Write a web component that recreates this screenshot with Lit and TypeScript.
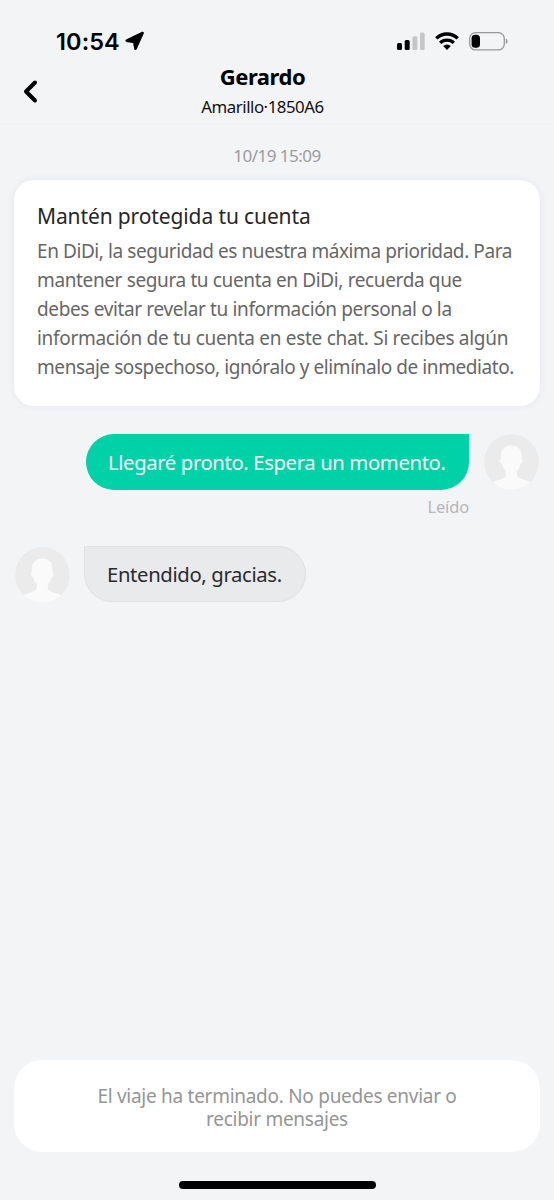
import { LitElement, html, css } from "lit";
import { customElement } from "lit/decorators.js";
import { styleMap } from "lit/directives/style-map.js";

@customElement("user-avatar")
export class UserAvatar extends LitElement {
  static styles = css`
    :host { display: block; flex: none; width: 55px; height: 56px; }
    svg { display: block; }
  `;
  render() {
    return html`<svg width="55" height="56" viewBox="0 0 55 56">
      <defs><clipPath id="round"><ellipse cx="27.5" cy="28" rx="27.300" ry="27.800" /></clipPath></defs>
      <g clip-path="url(#round)">
        <rect width="55" height="56" fill="#ebebec" />
        <path fill="#fafafa" d="M27.300 11.500c-6.600 0-10.400 4.200-10.400 10.400 0 1.200 0 2.300.1 3.300-1.100 0-1.200 1.400-.8 2.700.3 1.200.8 2 1.800 2 .6 3 1.900 5.200 3.800 7v3.600c0 3.200-3.500 4.300-6.800 5.300-3.200.9-5 1.700-7 3V57h39v-8.200c-2-1.300-3.800-2.100-7-3-3.300-1-7.200-2.100-7.200-5.300v-3.600c1.900-1.800 3.200-4 3.800-7 1 0 1.500-.8 1.800-2 .4-1.300.3-2.700-.8-2.700.1-1 .1-2.100.1-3.300 0-6.200-3.800-10.400-10.400-10.400z" />
      </g>
    </svg>`;
  }
}

@customElement("app-root")
export class AppRoot extends LitElement {
  static styles = css`
    :host {
      display: flex;
      flex-direction: column;
      box-sizing: border-box;
      width: 554px;
      height: 1200px;
      background: #f3f4f6;
      color: #000;
      font-family: "Noto Sans", "Open Sans", sans-serif;
      overflow: hidden;
    }
    .status { display: flex; align-items: center; height: 56px; padding: 26px 46px 0 56px; box-sizing: border-box; }
    .time { font: 600 23.500px/30px Inter, sans-serif; padding-top: 2px; letter-spacing: 0.1px; }
    .arrow { margin-left: 5px; }
    .grow { flex: 1; }
    .signal { margin-right: 10px; }
    .wifi { margin-right: 10px; }
    svg { display: block; flex: none; }
    .header { display: grid; grid-template-columns: 60px 1fr 60px; height: 68px; padding-right: 29px; box-sizing: border-box; border-bottom: 1px solid #f0f1f3; box-shadow: 0 1px 3px rgba(0, 0, 0, 0.02); }
    .back { padding: 23px 0 0 22px; }
    .who { text-align: center; padding-top: 6px; }
    .name { font-size: 22px; font-weight: 700; line-height: 28px; letter-spacing: -0.450px; }
    .car { font-size: 16.800px; line-height: 24px; padding-top: 5px; color: #111; letter-spacing: -0.450px; }
    .date { margin-top: 20px; height: 24px; line-height: 24px; font-size: 17px; letter-spacing: -0.520px; text-align: center; color: #9b9c9e; }
    .notice { margin: 12px 14px 0; height: 226px; box-sizing: border-box; padding: 20px 23px 0; border-radius: 20px; background: #fff; box-shadow: 0 0 8px rgba(30, 40, 60, 0.06); white-space: nowrap; }
    .title { font-size: 21px; line-height: 32px; color: #262626; letter-spacing: -0.120px; }
    .body { padding-top: 5px; font-size: 19px; line-height: 29px; color: #666; }
    .row { display: flex; }
    .sent { margin: 28px 15px 0 0; justify-content: flex-end; gap: 15px; }
    .received { margin: 27px 0 0 15px; gap: 14px; }
    .received user-avatar { margin-top: 1px; }
    .bubble { display: flex; align-items: center; box-sizing: border-box; height: 56px; font-size: 20.300px; white-space: nowrap; }
    .mine { width: 383px; padding: 0 0 1px 22px; background: #01d1a6; color: #fff; border-radius: 28px 0 28px 28px; letter-spacing: -0.380px; }
    .theirs { width: 222px; padding: 0 0 0 22px; background: #e9eaec; color: #2b2b2e; border: 1px solid #dfe0e2; border-radius: 0 28px 28px 28px; letter-spacing: -0.360px; }
    .read { height: 24px; margin: 5px 85px 0 0; text-align: right; font-size: 16.500px; line-height: 24px; color: #b6b7b9; letter-spacing: -0.150px; }
    .ended { box-sizing: border-box; margin: 0 14px; height: 92px; padding: 25px 80px 0; border-radius: 28px; background: #fff; color: #959595; font-size: 19px; line-height: 23px; letter-spacing: -0.280px; text-align: center; }
    .home { width: 197px; height: 8px; margin: 29px auto 11px 179px; border-radius: 4px; background: #000; }
  `;

  private notice = [
    { text: "En DiDi, la seguridad es nuestra máxima prioridad. Para", tracking: -0.42 },
    { text: "mantener segura tu cuenta en DiDi, recuerda que", tracking: -0.37 },
    { text: "debes evitar revelar tu información personal o la", tracking: -0.36 },
    { text: "información de tu cuenta en este chat. Si recibes algún", tracking: -0.3 },
    { text: "mensaje sospechoso, ignóralo y elimínalo de inmediato.", tracking: -0.42 },
  ];

  render() {
    return html`
      <div class="status">
        <span class="time">10:54</span>
        <svg class="arrow" width="20" height="20" viewBox="0 0 20 20"><path d="M1.700 9.600 17.600 2 10.500 17.700 9.200 11z" stroke="#000" stroke-width="2.600" stroke-linejoin="round" /></svg>
        <span class="grow"></span>
        <svg class="signal" width="28" height="18" viewBox="0 0 28 18">
          <rect x="0" y="11" width="5" height="7" rx="1.500" /><rect x="7.700" y="8" width="5" height="10" rx="1.500" />
          <rect x="15.400" y="4.300" width="5" height="13.700" rx="1.500" fill="#c5c6c8" /><rect x="23" y="0.500" width="4.700" height="17.500" rx="1.500" fill="#c5c6c8" />
        </svg>
        <svg class="wifi" width="24" height="18" viewBox="0 0 24 18">
          <g fill="none" stroke="#000" stroke-width="3.400"><path d="M1.300 6.400a15.200 15.200 0 0 1 21.400 0" /><path d="M5.200 10.900a9.600 9.600 0 0 1 13.600 0" /></g>
          <path d="M8.200 14.100a5.500 5.500 0 0 1 7.600 0L12 17.900z" />
        </svg>
        <svg width="39" height="19" viewBox="0 0 39 19">
          <rect x=".7" y=".7" width="34.600" height="17.200" rx="5.800" fill="none" stroke="#98999b" stroke-width="1.300" />
          <rect x="2.600" y="2.800" width="8.400" height="13" rx="3.600" /><path d="M36.800 6.500q1.800.8 1.800 2.800t-1.800 2.800z" fill="#98999b" />
        </svg>
      </div>
      <div class="header">
        <div class="back"><svg width="17" height="25" viewBox="0 0 17 25"><path d="M13 3.500 4 12.500l9 9" fill="none" stroke="#000" stroke-width="4" stroke-linecap="round" stroke-linejoin="round" /></svg></div>
        <div class="who"><div class="name">Gerardo</div><div class="car">Amarillo·1850A6</div></div>
      </div>
      <div class="date">10/19 15:09</div>
      <div class="notice">
        <div class="title">Mantén protegida tu cuenta</div>
        <div class="body">
          ${this.notice.map((l) => html`<div style=${styleMap({ letterSpacing: `${l.tracking}px` })}>${l.text}</div>`)}
        </div>
      </div>
      <div class="row sent"><div class="bubble mine">Llegaré pronto. Espera un momento.</div><user-avatar></user-avatar></div>
      <div class="read">Leído</div>
      <div class="row received"><user-avatar></user-avatar><div class="bubble theirs">Entendido, gracias.</div></div>
      <span class="grow"></span>
      <div class="ended">El viaje ha terminado. No puedes enviar o recibir mensajes</div>
      <div class="home"></div>
    `;
  }
}
